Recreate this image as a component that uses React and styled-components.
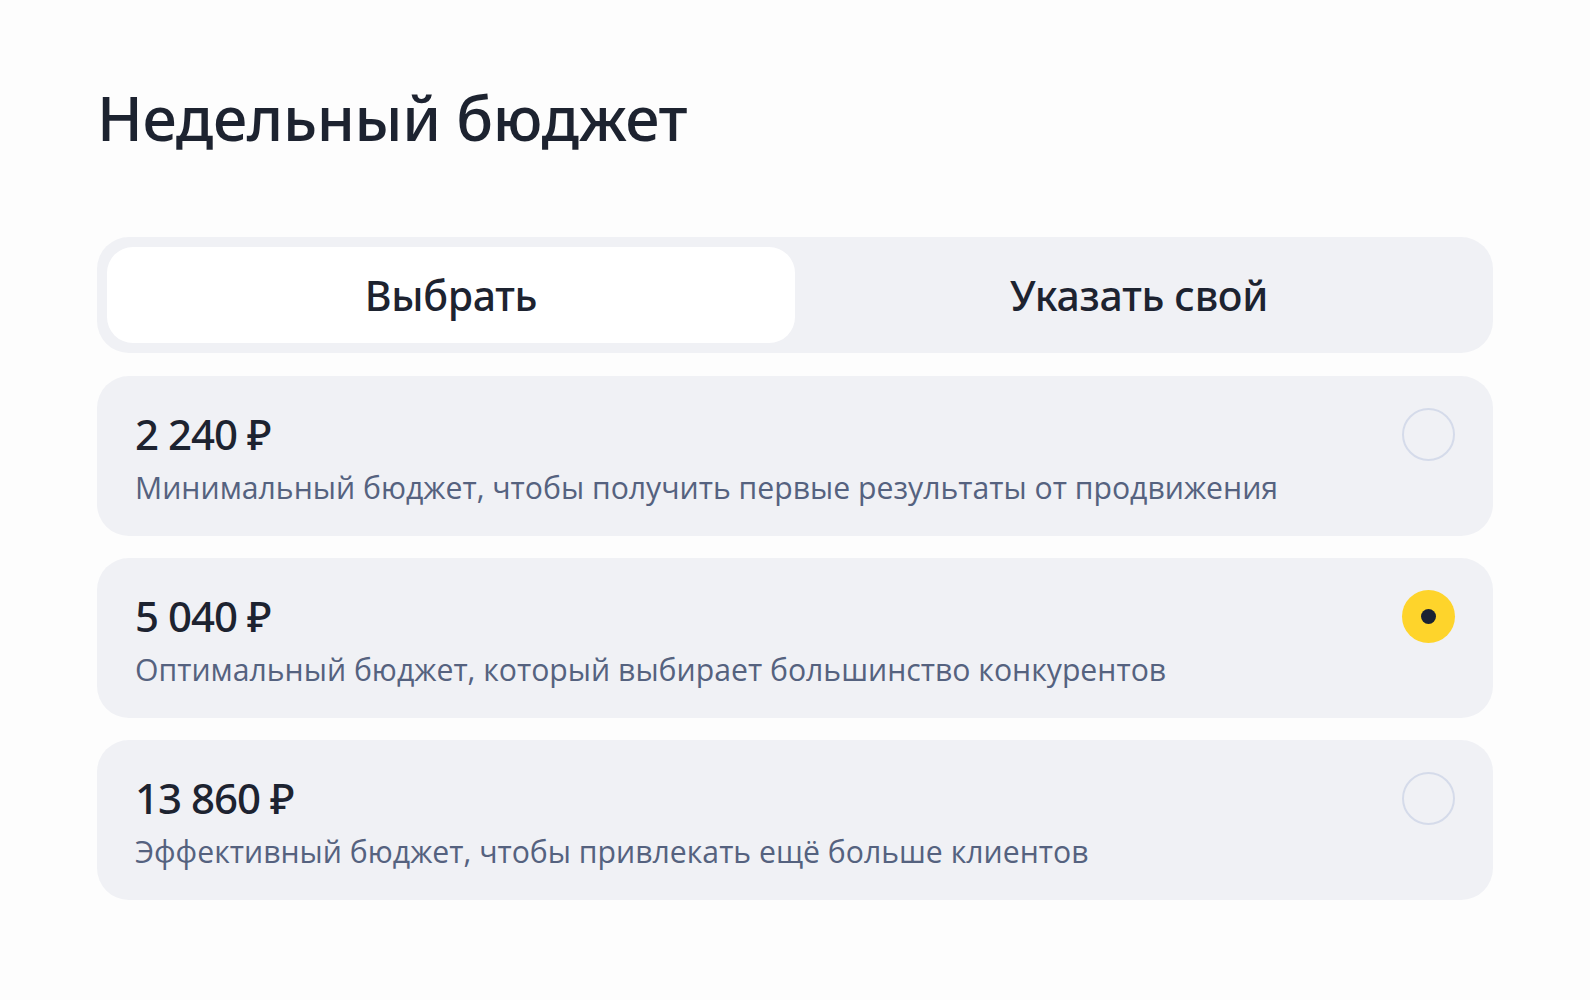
import React, { useState } from 'react';
import styled, { createGlobalStyle } from 'styled-components';

const GlobalStyle = createGlobalStyle`
    html, body {
        margin: 0;
        padding: 0;
        background: #fdfdfd;
    }
    body {
        font-family: 'Open Sans', 'Noto Sans', sans-serif;
        -webkit-font-smoothing: antialiased;
    }
`;

const Page = styled.div`
    width: 1590px;
    min-height: 1000px;
    box-sizing: border-box;
    padding: 80px 97px 0 97px;
    display: flex;
    flex-direction: column;
`;

const Title = styled.h1`
    margin: 0 0 81px;
    font-family: 'Noto Sans', sans-serif;
    font-size: 61px;
    font-weight: 500;
    line-height: 76px;
    color: #1d2330;
    letter-spacing: -0.35px;
`;

const Tabs = styled.div`
    display: grid;
    grid-template-columns: 1fr 1fr;
    padding: 10px;
    border-radius: 32px;
    background: #f0f1f5;
    margin-bottom: 23px;
`;

const Tab = styled.button`
    height: 96px;
    border: none;
    border-radius: 26px;
    background: ${(p) => (p.$active ? '#ffffff' : 'transparent')};
    font-family: 'Noto Sans', sans-serif;
    font-size: 41px;
    font-weight: 500;
    color: #1d2330;
    cursor: pointer;
    letter-spacing: -0.3px;
`;

const List = styled.div`
    display: flex;
    flex-direction: column;
    gap: 22px;
`;

const Option = styled.label`
    height: 160px;
    box-sizing: border-box;
    padding: 32px 38px 0 38px;
    display: flex;
    align-items: flex-start;
    justify-content: space-between;
    border-radius: 32px;
    background: #f0f1f5;
    cursor: pointer;
`;

const Texts = styled.div`
    display: flex;
    flex-direction: column;
`;

const Price = styled.div`
    font-family: 'Noto Sans', sans-serif;
    font-size: 42px;
    font-weight: 500;
    line-height: 52px;
    color: #1d2330;
    letter-spacing: -1px;
`;

const Description = styled.div`
    margin-top: 8px;
    font-size: 30.2px;
    line-height: 40px;
    color: #55627f;
`;

const Radio = styled.span`
    width: 53px;
    height: 53px;
    box-sizing: border-box;
    border-radius: 50%;
    flex-shrink: 0;
    display: flex;
    align-items: center;
    justify-content: center;
    background: ${(p) => (p.$checked ? '#fed42b' : 'transparent')};
    border: ${(p) => (p.$checked ? 'none' : '2px solid #d5dbea')};

    &::after {
        content: '';
        display: ${(p) => (p.$checked ? 'block' : 'none')};
        width: 15px;
        height: 15px;
        border-radius: 50%;
        background: #1a2233;
    }
`;

const options = [
    { id: 1, price: '2 240 ₽', text: 'Минимальный бюджет, чтобы получить первые результаты от продвижения' },
    { id: 2, price: '5 040 ₽', text: 'Оптимальный бюджет, который выбирает большинство конкурентов' },
    { id: 3, price: '13 860 ₽', text: 'Эффективный бюджет, чтобы привлекать ещё больше клиентов' },
];

const App = () => {
    const [mode, setMode] = useState('pick');
    const [selected, setSelected] = useState(2);

    return (
        <Page>
            <GlobalStyle />
            <Title>Недельный бюджет</Title>
            <Tabs>
                <Tab $active={mode === 'pick'} onClick={() => setMode('pick')}>Выбрать</Tab>
                <Tab $active={mode === 'own'} onClick={() => setMode('own')}>Указать свой</Tab>
            </Tabs>
            <List>
                {options.map((option) => (
                    <Option key={option.id} onClick={() => setSelected(option.id)}>
                        <Texts>
                            <Price>{option.price}</Price>
                            <Description>{option.text}</Description>
                        </Texts>
                        <Radio $checked={selected === option.id} />
                    </Option>
                ))}
            </List>
        </Page>
    );
};

export default App;
